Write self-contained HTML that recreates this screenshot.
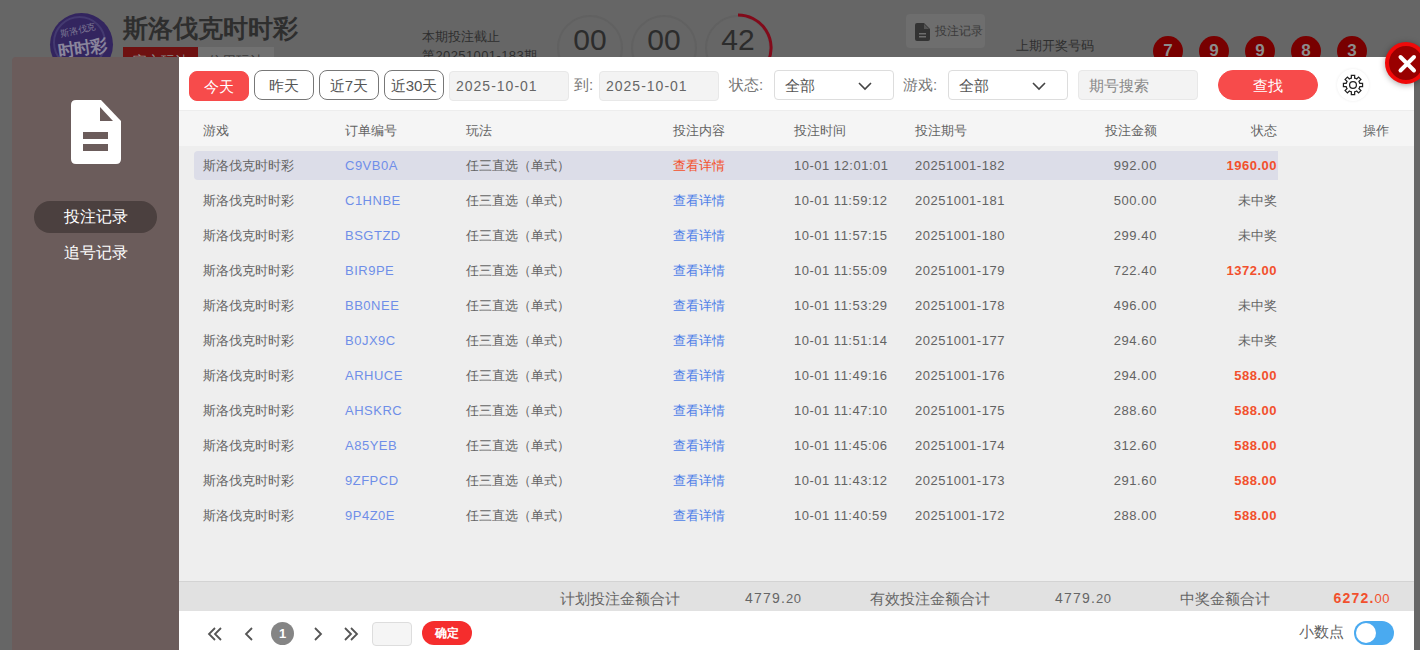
<!DOCTYPE html>
<html><head><meta charset="utf-8">
<style>
*{margin:0;padding:0;box-sizing:border-box}
html,body{width:1420px;height:650px;overflow:hidden;background:#666;font-family:"Liberation Sans",sans-serif;color:#333}
#bg{position:absolute;left:0;top:0;width:1420px;height:650px;background:#666}
.logo{position:absolute;left:50px;top:13px;width:63px;height:63px;border-radius:50%;background:#33255f;overflow:hidden}
.title{position:absolute;left:123px;top:12px;font-size:25px;font-weight:bold;color:#2e2e2e;letter-spacing:0px;white-space:nowrap}
.tabr{position:absolute;left:123px;top:47px;width:75px;height:24px;background:#6e1111;color:#8a8a8a;font-size:14px;line-height:29px;text-align:center;overflow:hidden}
.tabg{position:absolute;left:198px;top:47px;width:76px;height:24px;background:#717171;color:#3a3a3a;font-size:14px;line-height:29px;text-align:center;overflow:hidden}
.cd1{position:absolute;left:422px;top:28px;font-size:13px;color:#2e2e2e;white-space:nowrap}
.cd2{position:absolute;left:422px;top:47px;font-size:13px;letter-spacing:0.4px;color:#2e2e2e;white-space:nowrap}
.circ{position:absolute;top:15px;width:66px;height:66px;border-radius:50%;border:2px solid #616161;font-size:30px;color:#2c2c2c;text-align:center;line-height:46px}
.rec{position:absolute;left:906px;top:14px;width:79px;height:34px;background:#6e6e6e;border-radius:4px;font-size:12px;color:#3a3a3a;line-height:34px;padding-left:29px}
.prev{position:absolute;left:1016px;top:38px;font-size:12.5px;color:#2e2e2e;white-space:nowrap}
.ball{position:absolute;top:36px;width:30px;height:30px;border-radius:50%;background:#780000;color:#8c8c8c;font-weight:bold;font-size:17px;text-align:center;line-height:30px}
#side{position:absolute;left:12px;top:57px;width:167px;height:600px;background:#6b5c5b;border-radius:4px 0 0 0}
.tab{position:absolute;left:22px;width:123px;height:32px;border-radius:16px;color:#fff;font-size:16px;text-align:center;line-height:32px}
#main{position:absolute;left:179px;top:57px;width:1235px;height:600px;background:#fff}
.btn{position:absolute;top:13px;height:30px;border:1px solid #777;border-radius:8px;font-size:15px;color:#555;text-align:center;line-height:29px;background:#fff;white-space:nowrap}
.btn.on{background:#f74b4b;border-color:#f74b4b;color:#fff}
.inp{position:absolute;top:14px;height:30px;background:#f3f3f3;border:1px solid #e8e8e8;border-radius:4px;font-size:14px;color:#666;line-height:29px;padding-left:6px;letter-spacing:1px;white-space:nowrap}
.lbl{position:absolute;top:14px;line-height:28px;font-size:15px;color:#777;white-space:nowrap}
.sel{position:absolute;top:13px;height:30px;background:#fff;border:1px solid #ddd;border-radius:4px;font-size:15px;color:#555;line-height:29px;padding-left:10px}
.sel svg{position:absolute;right:21px;top:11px}
#thead{position:absolute;left:0;top:53px;width:1235px;height:40px;background:#f5f5f5;border-top:1px solid #ededed;font-size:13px;color:#636363}
#tbody{position:absolute;left:0;top:89px;width:1235px;height:435px;background:#eeeeee}
.th{position:absolute;top:0px;line-height:40px;white-space:nowrap}
.th.r{text-align:right}
.row{position:absolute;left:0;width:1235px;height:35px;font-size:13px;color:#636363}
.row .c{position:absolute;top:0;line-height:32px;white-space:nowrap}
.hl{position:absolute;left:15px;top:1px;width:1084px;height:29px;background:#dcdde8;border-radius:4px 0 0 4px}
.g{left:24px}.oid{left:166px;color:#6f8ee8;letter-spacing:0.5px}.wf{left:287px}.lk{left:494px;color:#4d7ee8}.lk.red2{color:#f3502a}
.tm{left:615px;letter-spacing:0.5px}.pr{left:736px;letter-spacing:0.5px}
.c.r{text-align:right}
.am{right:257px;letter-spacing:0.6px}.st{right:137px}
.red{color:#f2502d;font-weight:bold;letter-spacing:0.5px}
#sum{position:absolute;left:0;top:524px;width:1235px;height:30px;background:#e1e1e1;border-top:1px solid #d3d3d3;font-size:15px;color:#666}
#sum div{position:absolute;top:1px;line-height:31px;white-space:nowrap}
#sum .n{font-size:14px;letter-spacing:1.2px}
#sum small{font-size:13px;letter-spacing:0.5px}
#foot{position:absolute;left:0;top:554px;width:1235px;height:50px;background:#fff}
#foot .a{position:absolute}
</style></head><body>
<div id="bg">
  <div class="logo"><div style="position:absolute;left:3px;top:3px;width:53px;height:53px;border-radius:50%;border:2px solid #443a70"></div><div style="position:absolute;left:10px;top:11px;font-size:9px;color:#7d7894;transform:rotate(-12deg);white-space:nowrap">斯洛伐克</div><div style="position:absolute;left:8px;top:24px;font-size:17px;font-weight:bold;color:#8a869c;transform:rotate(-8deg);white-space:nowrap;letter-spacing:-1px">时时彩</div></div>
  <div class="title">斯洛伐克时时彩</div>
  <div class="tabr">官方玩法</div><div class="tabg">信用玩法</div>
  <div class="cd1">本期投注截止</div>
  <div class="cd2">第20251001-183期</div>
  <div class="circ" style="left:557px">00</div>
  <div class="circ" style="left:631px">00</div>
  <div class="circ" style="left:705px">42</div>
  <svg style="position:absolute;left:698px;top:8px" width="80" height="80"><path d="M 40 7 A 33 33 0 0 1 70 54" fill="none" stroke="#820a1a" stroke-width="3"/></svg>
  <div class="rec"><svg style="position:absolute;left:9px;top:9px" width="15" height="18" viewBox="0 0 15 18"><path d="M2 0 H9 L15 6 V16 Q15 18 13 18 H2 Q0 18 0 16 V2 Q0 0 2 0 Z" fill="#333"/><path d="M9 1 V6 H14 Z" fill="#555"/><rect x="4" y="10" width="7" height="1.5" fill="#6e6e6e"/><rect x="4" y="13" width="7" height="1.5" fill="#6e6e6e"/></svg>投注记录</div>
  <div class="prev">上期开奖号码</div>
  <div class="ball" style="left:1153px">7</div>
  <div class="ball" style="left:1199px">9</div>
  <div class="ball" style="left:1245px">9</div>
  <div class="ball" style="left:1291px">8</div>
  <div class="ball" style="left:1337px">3</div>
</div>
<div id="side">
  <svg style="position:absolute;left:58px;top:43px" width="52" height="65" viewBox="0 0 52 65">
    <path d="M6 0 H31 L51 21 V59 Q51 64 46 64 H6 Q1 64 1 59 V5 Q1 0 6 0 Z" fill="#fff"/>
    <path d="M30 7 V21 H43 Z" fill="#6b5c5b"/>
    <rect x="13" y="32" width="25" height="7" fill="#6b5c5b"/>
    <rect x="13" y="44" width="25" height="7" fill="#6b5c5b"/>
  </svg>
  <div class="tab" style="top:144px;background:#4b403f">投注记录</div>
  <div class="tab" style="top:180px">追号记录</div>
</div>
<div id="main">
  <div class="btn on" style="left:10px;width:60px;top:14px">今天</div>
  <div class="btn" style="left:75px;width:60px">昨天</div>
  <div class="btn" style="left:140px;width:60px">近7天</div>
  <div class="btn" style="left:205px;width:60px">近30天</div>
  <div class="inp" style="left:270px;width:120px">2025-10-01</div>
  <div class="lbl" style="left:395px">到:</div>
  <div class="inp" style="left:420px;width:120px">2025-10-01</div>
  <div class="lbl" style="left:550px">状态:</div>
  <div class="sel" style="left:595px;width:120px">全部<svg width="14" height="9" viewBox="0 0 14 9"><path d="M1 1 L7 7 L13 1" fill="none" stroke="#444" stroke-width="1.6"/></svg></div>
  <div class="lbl" style="left:724px">游戏:</div>
  <div class="sel" style="left:769px;width:120px">全部<svg width="14" height="9" viewBox="0 0 14 9"><path d="M1 1 L7 7 L13 1" fill="none" stroke="#444" stroke-width="1.6"/></svg></div>
  <div class="inp" style="left:899px;width:120px;color:#888;font-size:15px;padding-left:10px;letter-spacing:0;top:13px">期号搜索</div>
  <div class="btn on" style="left:1039px;width:100px;border-radius:15px">查找</div>
  <div style="position:absolute;left:1158px;top:12px;width:32px;height:32px;border-radius:50%;background:#fff;box-shadow:0 0 3px rgba(0,0,0,0.08)"></div><svg style="position:absolute;left:1162px;top:16px" width="24" height="24" viewBox="0 0 24 24"><path d="M10.37 5.19 L10.35 2.44 L13.65 2.44 L13.63 5.19 A7.0 7.0 0 0 1 15.66 6.03 L17.59 4.07 L19.93 6.41 L17.97 8.34 A7.0 7.0 0 0 1 18.81 10.37 L21.56 10.35 L21.56 13.65 L18.81 13.63 A7.0 7.0 0 0 1 17.97 15.66 L19.93 17.59 L17.59 19.93 L15.66 17.97 A7.0 7.0 0 0 1 13.63 18.81 L13.65 21.56 L10.35 21.56 L10.37 18.81 A7.0 7.0 0 0 1 8.34 17.97 L6.41 19.93 L4.07 17.59 L6.03 15.66 A7.0 7.0 0 0 1 5.19 13.63 L2.44 13.65 L2.44 10.35 L5.19 10.37 A7.0 7.0 0 0 1 6.03 8.34 L4.07 6.41 L6.41 4.07 L8.34 6.03 A7.0 7.0 0 0 1 10.37 5.19 Z" fill="none" stroke="#222" stroke-width="1.25" stroke-linejoin="miter"/><circle cx="12" cy="12" r="3.4" fill="none" stroke="#222" stroke-width="1.25"/></svg>
  <div id="thead">
    <div class="th" style="left:24px">游戏</div>
    <div class="th" style="left:166px">订单编号</div>
    <div class="th" style="left:287px">玩法</div>
    <div class="th" style="left:494px">投注内容</div>
    <div class="th" style="left:615px">投注时间</div>
    <div class="th" style="left:736px">投注期号</div>
    <div class="th r" style="right:257px">投注金额</div>
    <div class="th r" style="right:137px">状态</div>
    <div class="th r" style="right:25px">操作</div>
  </div>
  <div id="tbody"></div>
<div class="row" style="top:93px"><div class="hl"></div><div class="c g">斯洛伐克时时彩</div><div class="c oid">C9VB0A</div><div class="c wf">任三直选（单式）</div><div class="c lk red2">查看详情</div><div class="c tm">10-01 12:01:01</div><div class="c pr">20251001-182</div><div class="c r am">992.00</div><div class="c r st red">1960.00</div></div>
<div class="row" style="top:128px"><div class="c g">斯洛伐克时时彩</div><div class="c oid">C1HNBE</div><div class="c wf">任三直选（单式）</div><div class="c lk">查看详情</div><div class="c tm">10-01 11:59:12</div><div class="c pr">20251001-181</div><div class="c r am">500.00</div><div class="c r st">未中奖</div></div>
<div class="row" style="top:163px"><div class="c g">斯洛伐克时时彩</div><div class="c oid">BSGTZD</div><div class="c wf">任三直选（单式）</div><div class="c lk">查看详情</div><div class="c tm">10-01 11:57:15</div><div class="c pr">20251001-180</div><div class="c r am">299.40</div><div class="c r st">未中奖</div></div>
<div class="row" style="top:198px"><div class="c g">斯洛伐克时时彩</div><div class="c oid">BIR9PE</div><div class="c wf">任三直选（单式）</div><div class="c lk">查看详情</div><div class="c tm">10-01 11:55:09</div><div class="c pr">20251001-179</div><div class="c r am">722.40</div><div class="c r st red">1372.00</div></div>
<div class="row" style="top:233px"><div class="c g">斯洛伐克时时彩</div><div class="c oid">BB0NEE</div><div class="c wf">任三直选（单式）</div><div class="c lk">查看详情</div><div class="c tm">10-01 11:53:29</div><div class="c pr">20251001-178</div><div class="c r am">496.00</div><div class="c r st">未中奖</div></div>
<div class="row" style="top:268px"><div class="c g">斯洛伐克时时彩</div><div class="c oid">B0JX9C</div><div class="c wf">任三直选（单式）</div><div class="c lk">查看详情</div><div class="c tm">10-01 11:51:14</div><div class="c pr">20251001-177</div><div class="c r am">294.60</div><div class="c r st">未中奖</div></div>
<div class="row" style="top:303px"><div class="c g">斯洛伐克时时彩</div><div class="c oid">ARHUCE</div><div class="c wf">任三直选（单式）</div><div class="c lk">查看详情</div><div class="c tm">10-01 11:49:16</div><div class="c pr">20251001-176</div><div class="c r am">294.00</div><div class="c r st red">588.00</div></div>
<div class="row" style="top:338px"><div class="c g">斯洛伐克时时彩</div><div class="c oid">AHSKRC</div><div class="c wf">任三直选（单式）</div><div class="c lk">查看详情</div><div class="c tm">10-01 11:47:10</div><div class="c pr">20251001-175</div><div class="c r am">288.60</div><div class="c r st red">588.00</div></div>
<div class="row" style="top:373px"><div class="c g">斯洛伐克时时彩</div><div class="c oid">A85YEB</div><div class="c wf">任三直选（单式）</div><div class="c lk">查看详情</div><div class="c tm">10-01 11:45:06</div><div class="c pr">20251001-174</div><div class="c r am">312.60</div><div class="c r st red">588.00</div></div>
<div class="row" style="top:408px"><div class="c g">斯洛伐克时时彩</div><div class="c oid">9ZFPCD</div><div class="c wf">任三直选（单式）</div><div class="c lk">查看详情</div><div class="c tm">10-01 11:43:12</div><div class="c pr">20251001-173</div><div class="c r am">291.60</div><div class="c r st red">588.00</div></div>
<div class="row" style="top:443px"><div class="c g">斯洛伐克时时彩</div><div class="c oid">9P4Z0E</div><div class="c wf">任三直选（单式）</div><div class="c lk">查看详情</div><div class="c tm">10-01 11:40:59</div><div class="c pr">20251001-172</div><div class="c r am">288.00</div><div class="c r st red">588.00</div></div>
  <div id="sum">
    <div style="left:381px">计划投注金额合计</div>
    <div class="n" style="left:566px">4779.<small>20</small></div>
    <div style="left:691px">有效投注金额合计</div>
    <div class="n" style="left:876px">4779.<small>20</small></div>
    <div style="left:1001px">中奖金额合计</div>
    <div class="n" style="right:24px;color:#f2502d"><b>6272.</b><small>00</small></div>
  </div>
  <div id="foot">
    <svg class="a" style="left:28px;top:16px" width="16" height="14" viewBox="0 0 16 14"><path d="M8 1 L2 7 L8 13 M14 1 L8 7 L14 13" fill="none" stroke="#555" stroke-width="1.8"/></svg>
    <svg class="a" style="left:65px;top:16px" width="10" height="14" viewBox="0 0 10 14"><path d="M8 1 L2 7 L8 13" fill="none" stroke="#555" stroke-width="1.8"/></svg>
    <div class="a" style="left:92px;top:11px;width:23px;height:23px;border-radius:50%;background:#858585;color:#fff;font-weight:bold;font-size:13px;text-align:center;line-height:23px">1</div>
    <svg class="a" style="left:134px;top:16px" width="10" height="14" viewBox="0 0 10 14"><path d="M2 1 L8 7 L2 13" fill="none" stroke="#555" stroke-width="1.8"/></svg>
    <svg class="a" style="left:164px;top:16px" width="16" height="14" viewBox="0 0 16 14"><path d="M2 1 L8 7 L2 13 M8 1 L14 7 L8 13" fill="none" stroke="#555" stroke-width="1.8"/></svg>
    <div class="a" style="left:193px;top:11px;width:40px;height:24px;border-radius:4px;background:#f5f5f5;border:1px solid #ddd"></div>
    <div class="a" style="left:243px;top:10px;width:50px;height:24px;border-radius:12px;background:#f52d2d;color:#fff;font-weight:bold;font-size:12px;text-align:center;line-height:24px">确定</div>
    <div class="a" style="left:1120px;top:12px;font-size:15px;color:#5f5f5f;line-height:18px">小数点</div>
    <div class="a" style="left:1175px;top:10px;width:40px;height:24px;border-radius:12px;background:#4aaaf0"><div style="position:absolute;left:2px;top:2px;width:20px;height:20px;border-radius:50%;background:#fff"></div></div>
  </div>
</div>
<div style="position:absolute;left:1385px;top:42px;width:42px;height:42px;border-radius:50%;background:#990000;border:4px solid #f00a0a;box-shadow:0 1px 6px rgba(0,0,0,0.35)"><svg style="position:absolute;left:8px;top:8px" width="20" height="20" viewBox="0 0 20 20"><path d="M3.5 3 L17 16.5 M17 3 L3.5 16.5" stroke="#fff" stroke-width="4" stroke-linecap="round"/></svg></div>
</body></html>
